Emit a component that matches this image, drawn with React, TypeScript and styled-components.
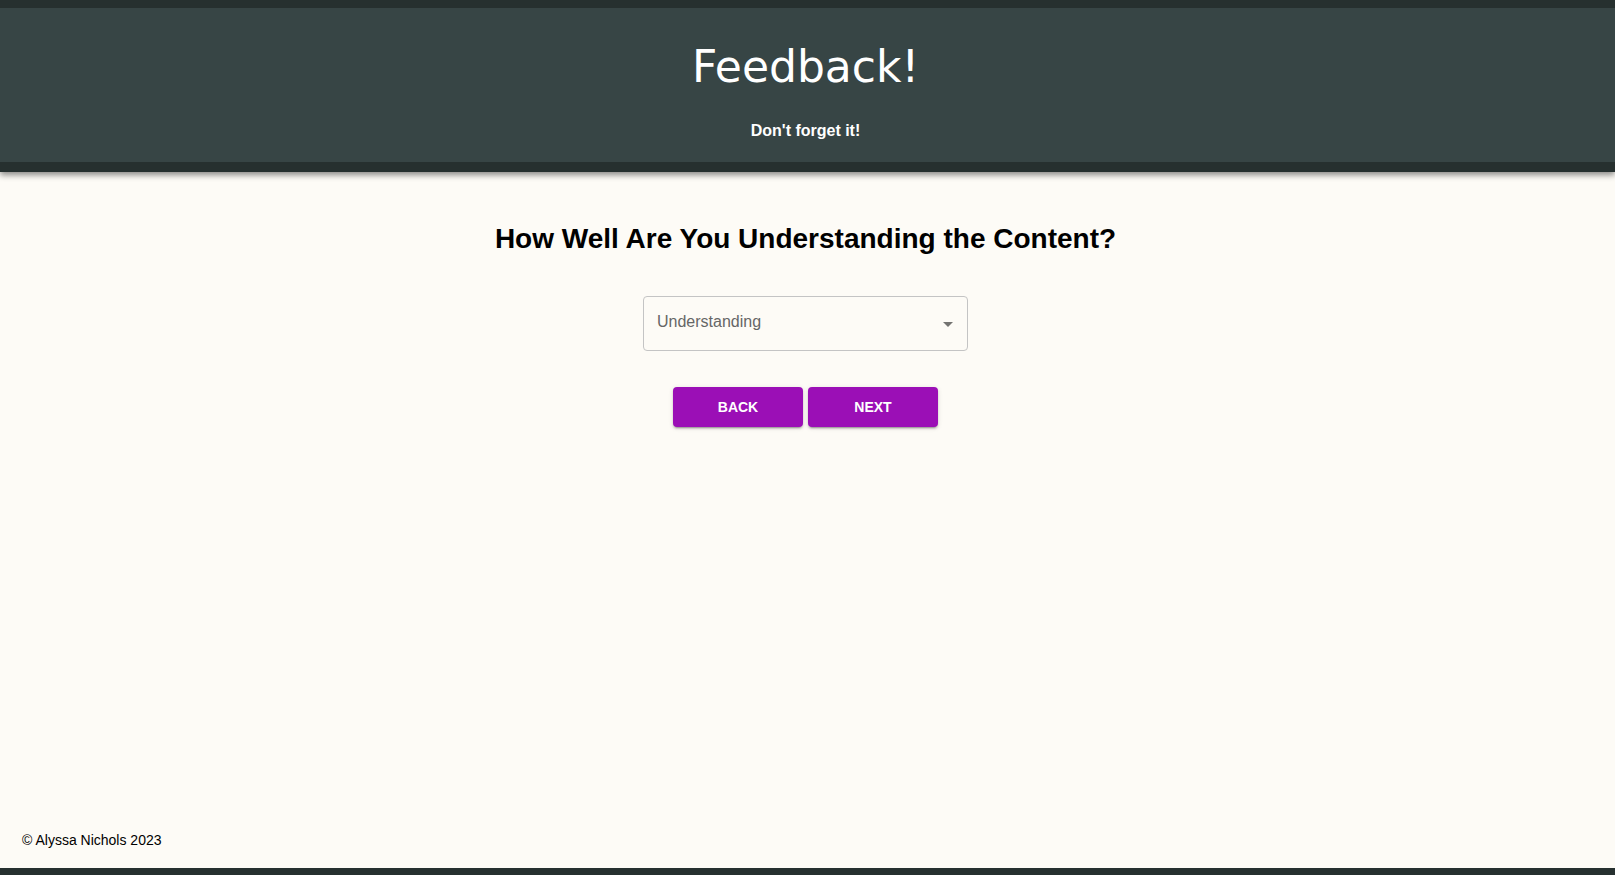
import React from 'react'
import styled, { createGlobalStyle } from 'styled-components'

const GlobalStyle = createGlobalStyle`
  body {
    margin: 0;
    background: #fdfbf6;
    font-family: 'Liberation Sans', Arial, sans-serif;
  }
`

const Page = styled.div`
  min-height: 100vh;
  display: flex;
  flex-direction: column;
  box-sizing: border-box;
`

const Header = styled.header`
  background: #374545;
  border-top: 8px solid #26302f;
  border-bottom: 10px solid #26302f;
  box-shadow: 0 3px 6px rgba(0, 0, 0, 0.45);
  padding: 33px 4px 22px 0;
  text-align: center;
  color: #fff;
`

const Title = styled.h1`
  margin: 0;
  font-family: 'DejaVu Sans', Verdana, sans-serif;
  font-weight: normal;
  font-size: 44px;
  line-height: 51px;
`

const Subtitle = styled.p`
  margin: 30px 0 0;
  font-weight: bold;
  font-size: 16px;
  line-height: 18px;
`

const Main = styled.main`
  flex: 1;
  display: flex;
  flex-direction: column;
  align-items: center;
  padding: 51px 4px 0 0;
`

const Question = styled.h2`
  margin: 0;
  font-size: 28px;
  line-height: 32px;
  font-weight: bold;
  color: #000;
`

const SelectBox = styled.div`
  position: relative;
  margin-top: 41px;
  width: 325px;
  height: 55px;
  box-sizing: border-box;
  border: 1px solid #c4c4c4;
  border-radius: 4px;
  display: flex;
  align-items: center;
  padding: 0 32px 3px 13px;
  font-size: 16px;
  color: #666;
  cursor: pointer;
`

const Arrow = styled.svg`
  position: absolute;
  right: 7px;
  top: 50%;
  transform: translateY(-50%);
  width: 24px;
  height: 24px;
  fill: rgba(0, 0, 0, 0.54);
`

const ButtonRow = styled.div`
  display: flex;
  gap: 5px;
  margin-top: 36px;
`

const Button = styled.button`
  width: 130px;
  height: 40px;
  border: none;
  border-radius: 4px;
  background: #9b0fb6;
  color: #fff;
  font-family: 'Liberation Sans', Arial, sans-serif;
  font-weight: bold;
  font-size: 14px;
  text-transform: uppercase;
  box-shadow: 0 3px 1px -2px rgba(0, 0, 0, 0.2), 0 2px 2px 0 rgba(0, 0, 0, 0.14),
    0 1px 5px 0 rgba(0, 0, 0, 0.12);
  cursor: pointer;
`

const Footer = styled.footer`
  padding: 0 22px 20px;
  border-bottom: 7px solid #26302f;
  font-size: 14px;
  line-height: 16px;
  color: #000;
`

export default function App() {
  return (
    <Page>
      <GlobalStyle />
      <Header>
        <Title>Feedback!</Title>
        <Subtitle>Don't forget it!</Subtitle>
      </Header>
      <Main>
        <Question>How Well Are You Understanding the Content?</Question>
        <SelectBox>
          Understanding
          <Arrow viewBox="0 0 24 24">
            <path d="M7 10l5 5 5-5z" />
          </Arrow>
        </SelectBox>
        <ButtonRow>
          <Button>Back</Button>
          <Button>Next</Button>
        </ButtonRow>
      </Main>
      <Footer>© Alyssa Nichols 2023</Footer>
    </Page>
  )
}
